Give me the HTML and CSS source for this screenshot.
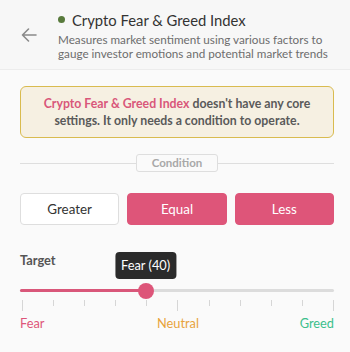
FILE: index.html
```html
<!DOCTYPE html>
<html>
<head>
<meta charset="utf-8">
<link rel="stylesheet" href="styles.css">
</head>
<body>
<div class="header">
  <svg class="back" width="18" height="18" viewBox="0 0 18 18"><path d="M16 9H2.5M8.5 3L2.5 9L8.5 15" fill="none" stroke="#8a8a8a" stroke-width="1.6" stroke-linecap="round" stroke-linejoin="round"/></svg>
  <div class="info">
    <div class="title-row"><span class="dot"></span><span class="title">Crypto Fear &amp; Greed Index</span></div>
    <div class="desc">Measures market sentiment using various factors to gauge investor emotions and potential market trends</div>
  </div>
</div>
<div class="content">
  <div class="notice"><p><span class="hl">Crypto Fear &amp; Greed Index</span> doesn't have any core settings. It only needs a condition to operate.</p></div>
  <div class="divider"><span class="line"></span><span class="label">Condition</span><span class="line"></span></div>
  <div class="buttons">
    <div class="btn">Greater</div>
    <div class="btn active">Equal</div>
    <div class="btn active">Less</div>
  </div>
  <div class="target">Target</div>
  <div class="slider">
    <div class="track"><div class="fill" style="width:40%"></div></div>
    <div class="thumb" style="left:40%"><div class="tip">Fear (40)</div></div>
    <div class="ticks">
      <span class="tick big"></span><span class="tick"></span><span class="tick"></span><span class="tick"></span><span class="tick"></span><span class="tick big"></span><span class="tick"></span><span class="tick"></span><span class="tick"></span><span class="tick"></span><span class="tick big"></span>
    </div>
    <div class="labels"><span class="fear">Fear</span><span class="neutral">Neutral</span><span class="greed">Greed</span></div>
  </div>
</div>
</body>
</html>
```
FILE: styles.css
```css
* { box-sizing: border-box; }
body {
  margin: 0;
  background: #fafafa;
  font-family: Lato, "Noto Sans", sans-serif;
  color: #333;
}
.header {
  height: 70px;
  display: flex;
  align-items: center;
  padding: 0 16px 0 20px;
  background: #f7f7f7;
  border-bottom: 1px solid #ececec;
}
.back { flex: none; margin-right: 20px; }
.info { display: flex; flex-direction: column; }
.title-row { display: flex; align-items: center; height: 20px; }
.dot { width: 7px; height: 7px; border-radius: 50%; background: #587a3c; margin-right: 7px; }
.title { font-size: 14.8px; color: #333; }
.desc { font-size: 11.7px; color: #6d6d6d; line-height: 14px; margin-top: 2px; width: 280px; }
.content { padding: 16px 16px 0 20px; }
.notice {
  height: 52px;
  border: 1px solid #d9bb4f;
  border-radius: 6px;
  background: #f6f0e2;
  display: flex;
  align-items: center;
  justify-content: center;
  text-align: center;
  padding: 0 18px;
  font-size: 12.3px;
  font-weight: 700;
  line-height: 17px;
  color: #5a5a5a;
}
.notice p { margin: 0; }
.hl { color: #d9577a; }
.divider { display: flex; align-items: center; margin-top: 16px; height: 18px; }
.line { flex: 1; height: 1px; background: #dedede; }
.label {
  height: 18px;
  padding: 0 15px;
  border: 1px solid #dedede;
  border-radius: 3px;
  font-size: 11.5px;
  font-weight: 700;
  color: #a8a8a8;
  line-height: 16px;
}
.buttons { display: flex; gap: 8px; margin-top: 21px; }
.btn {
  flex: 1;
  height: 32px;
  border-radius: 4px;
  border: 1px solid #dedede;
  background: #fff;
  display: flex;
  align-items: center;
  justify-content: center;
  font-size: 13.4px;
  color: #333;
}
.btn.active { background: #de5579; border-color: #de5579; color: #fff; }
.target { margin-top: 27px; font-size: 12.8px; font-weight: 700; color: #555; line-height: 16px; }
.slider { position: relative; margin-top: 21px; }
.track { height: 3px; background: #dcdcdc; border-radius: 2px; }
.fill { height: 3px; background: #d9577a; border-radius: 2px; }
.thumb {
  position: absolute;
  top: 1.5px;
  width: 16px;
  height: 16px;
  margin-left: -8px;
  margin-top: -8px;
  border-radius: 50%;
  background: #dd5579;
}
.tip {
  position: absolute;
  bottom: 20px;
  left: 50%;
  transform: translateX(-50%);
  background: #2b2b2b;
  color: #fff;
  font-size: 12.8px;
  height: 27px;
  line-height: 27px;
  padding: 0 6px;
  border-radius: 4px;
  white-space: nowrap;
}
.ticks { display: flex; justify-content: space-between; margin-top: 8px; padding: 0 0 0 2px; }
.tick { width: 1px; height: 6px; background: #d6d6d6; }
.tick.big { height: 11px; }
.labels { display: grid; grid-template-columns: 1fr auto 1fr; margin-top: 4px; font-size: 12.8px; line-height: 16px; }
.fear { color: #de5579; }
.neutral { color: #e8a33c; padding-left: 2px; }
.greed { color: #3cbf8c; text-align: right; }
```
